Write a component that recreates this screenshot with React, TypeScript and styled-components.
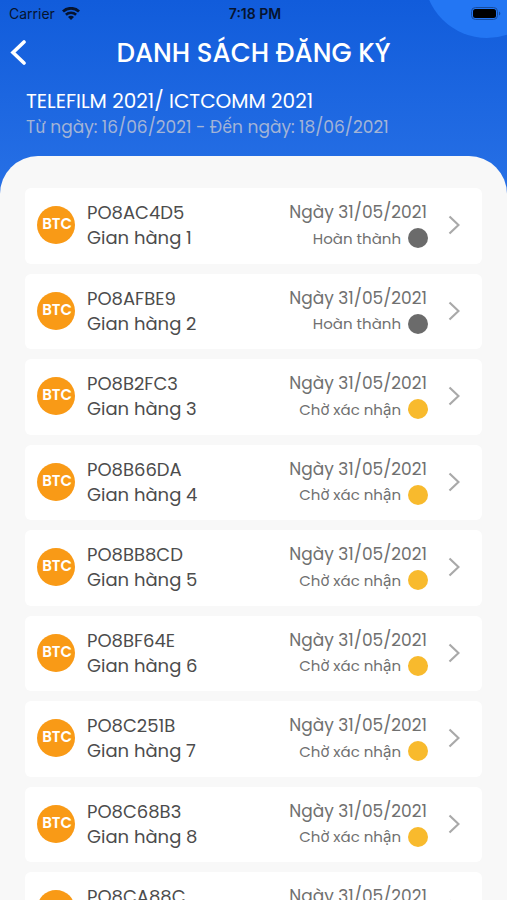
import React from "react";
import styled, { createGlobalStyle } from "styled-components";

const GlobalStyle = createGlobalStyle`
  * {
    box-sizing: border-box;
  }
  body {
    margin: 0;
    font-family: Poppins, Inter, sans-serif;
  }
`;

const Screen = styled.div`
  position: relative;
  display: flex;
  flex-direction: column;
  height: 100vh;
  overflow: hidden;
  background: linear-gradient(#115cdb, #2871e6 200px);
`;

const Bubble = styled.div`
  position: absolute;
  top: -88px;
  right: -43px;
  width: 126px;
  height: 126px;
  border-radius: 50%;
  background: #2376f3;
`;

const StatusBar = styled.div`
  position: relative;
  display: grid;
  grid-template-columns: 1fr auto 1fr;
  align-items: center;
  height: 28px;
  padding: 0 6px 0 9px;
  color: #06142f;
  font: 400 14px / 20px Inter, sans-serif;
`;

const Carrier = styled.div`
  display: flex;
  align-items: center;
  gap: 7px;
`;

const Clock = styled.time`
  font-weight: 600;
`;

const Battery = styled.svg`
  justify-self: end;
`;

const TitleBar = styled.header`
  position: relative;
  display: grid;
  grid-template-columns: 40px 1fr 40px;
  align-items: center;
  height: 50px;
`;

const BackButton = styled.button`
  display: flex;
  align-items: center;
  height: 40px;
  padding: 0 0 0 10px;
  border: 0;
  background: none;
  color: #fff;
  cursor: pointer;
`;

const Title = styled.h1`
  margin: 0;
  color: #fff;
  font-size: 26px;
  font-weight: 500;
  line-height: 40px;
  text-align: center;
  white-space: nowrap;
`;

const EventInfo = styled.section`
  padding: 10px 26px 16px;
`;

const EventName = styled.h2`
  margin: 0;
  color: #fff;
  font-size: 20px;
  font-weight: 400;
  line-height: 26px;
`;

const EventDates = styled.p`
  margin: 0;
  color: #a3b4d6;
  font-size: 17px;
  line-height: 26px;
`;

const Sheet = styled.main`
  flex: 1;
  min-height: 0;
  padding: 32px 25px 0;
  border-radius: 38px 38px 0 0;
  background: #f8f8f8;
  overflow-y: auto;
  scrollbar-width: none;
`;

const List = styled.ul`
  display: flex;
  flex-direction: column;
  gap: 10px;
  margin: 0;
  padding: 0 0 24px;
  list-style: none;
`;

const Card = styled.a`
  display: flex;
  align-items: center;
  padding: 12px 22px 13px 12px;
  border-radius: 6px;
  background: #fff;
  color: #4c4c4c;
  text-decoration: none;
`;

const Badge = styled.span`
  display: flex;
  flex: none;
  justify-content: flex-end;
  width: 38px;
  height: 38px;
  margin-right: 12px;
  padding-right: 3px;
  border-radius: 50%;
  background: #f99a16;
  color: #fff;
  font-size: 15px;
  font-weight: 600;
  line-height: 36px;
`;

const Booth = styled.span`
  display: flex;
  flex: 1;
  flex-direction: column;
  font-size: 18px;
  line-height: 25px;
  white-space: nowrap;
`;

const Details = styled.span`
  display: flex;
  flex-direction: column;
  align-items: flex-end;
  margin-right: 20px;
  color: #707070;
  white-space: nowrap;
`;

const RegisteredOn = styled.span`
  padding-right: 1px;
  font-size: 17px;
  line-height: 1.5;
`;

const Status = styled.span`
  display: flex;
  align-items: center;
  gap: 7px;
  font-size: 15px;
  line-height: 25px;
`;

const Dot = styled.span<{ $done: boolean }>`
  width: 20px;
  height: 20px;
  border-radius: 50%;
  background: ${({ $done }) => ($done ? "#6b6b6b" : "#f8ba2d")};
`;

const registrations = [
  { code: "PO8AC4D5", done: true },
  { code: "PO8AFBE9", done: true },
  { code: "PO8B2FC3", done: false },
  { code: "PO8B66DA", done: false },
  { code: "PO8BB8CD", done: false },
  { code: "PO8BF64E", done: false },
  { code: "PO8C251B", done: false },
  { code: "PO8C68B3", done: false },
  { code: "PO8CA88C", done: false },
];

function WifiIcon() {
  return (
    <svg width="18" height="14" viewBox="0 0 18 14" fill="none" stroke="currentColor" aria-hidden="true">
      <path d="M1 4.5a11.6 11.6 0 0 1 16 0" strokeWidth="2.8" />
      <path d="M3.9 7.8a7.4 7.4 0 0 1 10.2 0" strokeWidth="2.6" />
      <path d="M9 13.1 6 10.1a4.2 4.2 0 0 1 6 0Z" fill="currentColor" stroke="none" />
    </svg>
  );
}

export default function App() {
  return (
    <Screen>
      <GlobalStyle />
      <Bubble />
      <StatusBar>
        <Carrier>
          Carrier
          <WifiIcon />
        </Carrier>
        <Clock>7:18 PM</Clock>
        <Battery width="30" height="14" viewBox="0 0 30 14" aria-label="Pin đầy" role="img">
          <rect x="0.5" y="0.5" width="26" height="12" rx="4" fill="none" stroke="#174c9e" />
          <rect x="2" y="2" width="23" height="9" rx="2.5" fill="#000" />
          <path d="M28 4.5c1.8.6 1.8 3.4 0 4Z" fill="#174c9e" />
        </Battery>
      </StatusBar>
      <TitleBar>
        <BackButton type="button" aria-label="Quay lại">
          <svg width="17" height="26" viewBox="0 0 17 26" fill="none" stroke="currentColor" strokeWidth="3.6" strokeLinecap="round" aria-hidden="true">
            <path d="M14 2 3 12.500 14 23" />
          </svg>
        </BackButton>
        <Title>DANH SÁCH ĐĂNG KÝ</Title>
      </TitleBar>
      <EventInfo>
        <EventName>TELEFILM 2021/ ICTCOMM 2021</EventName>
        <EventDates>Từ ngày: 16/06/2021 - Đến ngày: 18/06/2021</EventDates>
      </EventInfo>
      <Sheet>
        <List>
          {registrations.map(({ code, done }, index) => (
            <li key={code}>
              <Card href={`#${code}`}>
                <Badge>BTC</Badge>
                <Booth>
                  <span>{code}</span>
                  <span>Gian hàng {index + 1}</span>
                </Booth>
                <Details>
                  <RegisteredOn>Ngày 31/05/2021</RegisteredOn>
                  <Status>
                    {done ? "Hoàn thành" : "Chờ xác nhận"}
                    <Dot $done={done} />
                  </Status>
                </Details>
                <svg width="12" height="20" viewBox="0 0 12 20" fill="none" stroke="#a9a9a9" strokeWidth="2.2" aria-hidden="true">
                  <path d="m1.500 1.500 9 8.500-9 8.500" />
                </svg>
              </Card>
            </li>
          ))}
        </List>
      </Sheet>
    </Screen>
  );
}
